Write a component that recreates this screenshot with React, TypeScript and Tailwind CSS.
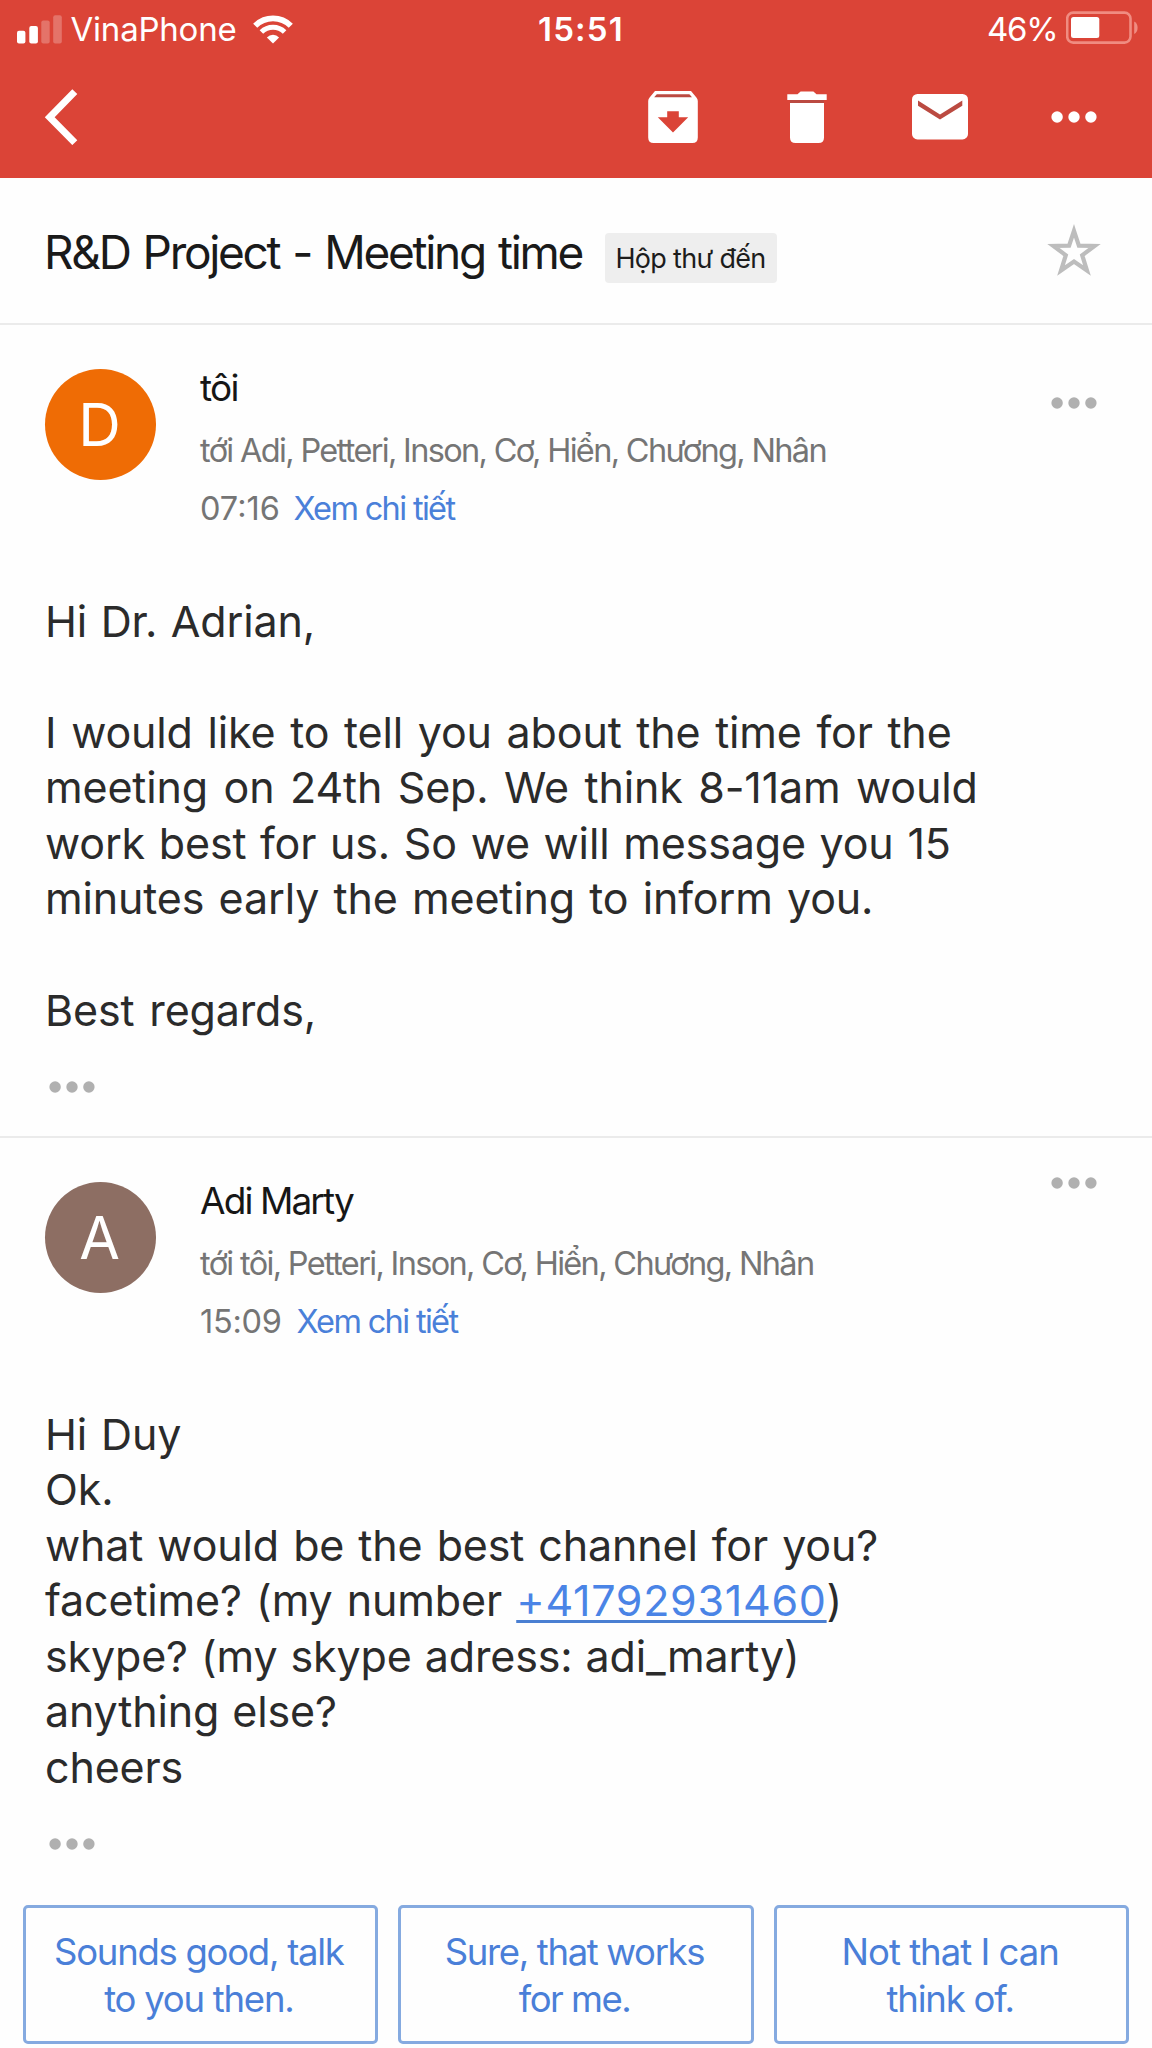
import type { ReactNode } from "react";

function Signal() {
  return (
    <svg className="h-[29px] w-[45px] shrink-0" viewBox="0 0 45 29" fill="#fff">
      <rect x="0" y="15.7" width="8.4" height="12.8" rx="2" />
      <rect x="12.3" y="11" width="8.6" height="17.5" rx="2" />
      <rect x="24.3" y="5.5" width="8.4" height="23" rx="2" opacity="0.25" />
      <rect x="36.2" y="0.2" width="8.6" height="28.3" rx="2" opacity="0.25" />
    </svg>
  );
}

function Wifi() {
  return (
    <svg className="h-[29px] w-[40px] shrink-0" viewBox="0 0 40 29" fill="none">
      <path d="M2.2 10.8A25.2 25.2 0 0 1 37.8 10.8" stroke="#fff" strokeWidth="5.8" />
      <path d="M8.4 17.1A16.4 16.4 0 0 1 31.6 17.1" stroke="#fff" strokeWidth="5" />
      <path d="M20 28.6L13.9 22.4A8.6 8.6 0 0 1 26.1 22.4Z" fill="#fff" />
    </svg>
  );
}

function Battery() {
  return (
    <svg className="h-[34px] w-[72px] shrink-0" viewBox="0 0 72 34">
      <rect x="1.2" y="1.6" width="63.3" height="30" rx="6" fill="none" stroke="#f08c81" strokeWidth="2.6" />
      <rect x="5" y="6" width="28.3" height="21" rx="2.5" fill="#fff" />
      <path d="M68.2 10.5Q71.6 12.4 71.6 16.8Q71.6 21.2 68.2 23Z" fill="#f08c81" />
    </svg>
  );
}

function Back() {
  return (
    <svg className="h-[56px] w-[34px] shrink-0" viewBox="0 0 34 56" fill="none">
      <path d="M30.8 2.6L5.7 28.2L30.8 53.6" stroke="#fff" strokeWidth="7" />
    </svg>
  );
}

function Archive() {
  return (
    <svg className="h-[52px] w-[50px] shrink-0" viewBox="0 0 50 52">
      <path d="M7 0H43L48.4 6.4Q49.8 8 49.8 10V46.5Q49.8 52 44.3 52H5.7Q0.2 52 0.2 46.5V10Q0.2 8 1.6 6.4Z" fill="#fff" />
      <path d="M8.8 3.2H41.4L44 6.3H6.2Z" fill="#bb4a41" />
      <path d="M19.2 20.2H30.8V26.2H40.2L25 41.5L9.8 26.2H19.2Z" fill="#db4437" />
    </svg>
  );
}

function Trash() {
  return (
    <svg className="h-[52px] w-[40px] shrink-0" viewBox="0 0 40 52">
      <path d="M0.3 3.2H10.5L13.6 0.6H26.4L29.5 3.2H39.7V9H0.3Z" fill="#fff" />
      <rect x="3" y="9" width="34" height="3" fill="#bb4a41" />
      <path d="M3 12H37V46.5Q37 52 31.5 52H8.5Q3 52 3 46.5Z" fill="#fff" />
    </svg>
  );
}

function Mail() {
  return (
    <svg className="h-[46px] w-[56px] shrink-0" viewBox="0 0 56 46">
      <rect width="56" height="45.4" rx="5.5" fill="#fff" />
      <path d="M6 6.5L28 20.4L50.3 6.5V11.8L28 25.6L6 11.8Z" fill="#bb4a41" />
    </svg>
  );
}

function Dots({ className }: { className: string }) {
  return (
    <svg className={"h-[12px] w-[46px] shrink-0 " + className} viewBox="0 0 46 12" fill="currentColor">
      <circle cx="6.1" cy="6" r="5.7" />
      <circle cx="23" cy="6" r="5.7" />
      <circle cx="39.9" cy="6" r="5.7" />
    </svg>
  );
}

function Star() {
  return (
    <svg className="h-[54px] w-[56px] shrink-0" viewBox="0 0 56 54" fill="none">
      <path
        d="M28 6.8L32.9 21.6L48.6 21.9L36.2 31.2L41 46.6L28 37.6L15 46.6L19.8 31.2L7.4 21.9L23.1 21.6Z"
        stroke="#bdbdbd"
        strokeWidth="4.2"
      />
    </svg>
  );
}

type MessageProps = {
  initial: string;
  avatar: string;
  name: ReactNode;
  to: ReactNode;
  time: ReactNode;
  menu: string;
  children: ReactNode;
};

function Message({ initial, avatar, name, to, time, menu, children }: MessageProps) {
  return (
    <>
      <div className="flex items-start pt-[44px] pr-[55px] pl-[45px]">
        <div className={"flex size-[111px] shrink-0 items-center justify-center rounded-full pr-[2px] text-[59px] leading-none text-white " + avatar}>
          {initial}
        </div>
        <div className="ml-[44px] flex-1 whitespace-nowrap">
          <div className="text-[37px] leading-[37px] text-[#161616]">{name}</div>
          <div className="mt-[15.5px] text-[32.5px] leading-[58px] tracking-[-1.67px] text-[#757575]">{to}</div>
          <div className="flex text-[32.5px] leading-[58px] text-[#757575]">
            {time}
            <a className="tracking-[-1.65px] text-[#4a80d9]">Xem chi tiết</a>
          </div>
        </div>
        <Dots className={"text-[#b0b0b0] " + menu} />
      </div>
      <div className="mt-[56px] pl-[45px] text-[43px] leading-[55.6px] tracking-[-0.15px] whitespace-nowrap text-[#2b2b2b]">
        {children}
      </div>
      <Dots className="mt-[42.7px] ml-[49px] text-[#b0b0b0]" />
    </>
  );
}

function Reply({ children }: { children: ReactNode }) {
  return (
    <button className="flex h-[139px] flex-col items-center justify-center rounded-[5px] border-3 border-[#85aae0] pt-[2px] pr-[3px] text-[36.5px] leading-[47px] text-[#4a7fd8]">
      {children}
    </button>
  );
}

export default function App() {
  return (
    <div className="h-[2048px] w-[1152px] overflow-hidden bg-[#fefefe] font-['Inter',sans-serif]">
      <header className="h-[178px] bg-[#db4437] text-white">
        <div className="flex h-[59px] items-center pr-[14px] pl-[16.5px] text-[33px]">
          <div className="flex w-[521.5px] items-center">
            <Signal />
            <span className="ml-[9px] tracking-[-0.21px]">VinaPhone</span>
            <span className="ml-[16px] flex">
              <Wifi />
            </span>
          </div>
          <span className="font-semibold tracking-[1.2px]">15:51</span>
          <span className="ml-auto tracking-[-1.2px]">46%</span>
          <span className="ml-[8.5px] -mt-[3px] flex">
            <Battery />
          </span>
        </div>
        <div className="flex h-[119px] items-center pr-[55px] pb-[3px] pl-[44px]">
          <Back />
          <div className="ml-auto flex items-center">
            <Archive />
            <span className="ml-[88.5px] flex">
              <Trash />
            </span>
            <span className="ml-[85.5px] flex">
              <Mail />
            </span>
            <Dots className="ml-[83px]" />
          </div>
        </div>
      </header>

      <div className="flex h-[147px] items-center border-b-2 border-[#ebebeb] pr-[50px] pl-[44px]">
        <h1 className="mt-[3px] w-[561px] text-[46px] leading-none tracking-[-2.3px] whitespace-nowrap text-[#1a1a1a] [word-spacing:2.4px]">
          R&amp;D Project - Meeting time
        </h1>
        <span className="mt-[14px] flex h-[50px] w-[171.5px] items-center rounded-[4px] bg-[#eeeeee] pt-[3px] pl-[10.5px] text-[27px] tracking-[-0.7px] whitespace-nowrap text-[#1c1c1c]">
          Hộp thư đến
        </span>
        <span className="ml-auto flex">
          <Star />
        </span>
      </div>

      <section className="h-[813px] border-b-2 border-[#ebebeb]">
        <Message
          initial="D"
          avatar="bg-[#ef6c05]"
          name={<span className="tracking-[-1.7px]">tôi</span>}
          to="tới Adi, Petteri, Inson, Cơ, Hiển, Chương, Nhân"
          time={<span className="w-[93.5px]">07:16</span>}
          menu="mt-[28px]"
        >
          <p className="[word-spacing:1.7px]">Hi Dr. Adrian,</p>
          <br />
          <p className="[word-spacing:2.8px]">I would like to tell you about the time for the</p>
          <p className="[word-spacing:3.6px]">meeting on 24th Sep. We think 8-11am would</p>
          <p className="[word-spacing:1.8px]">work best for us. So we will message you 15</p>
          <p className="[word-spacing:2.4px]">minutes early the meeting to inform you.</p>
          <br />
          <p className="[word-spacing:3px]">Best regards,</p>
        </Message>
      </section>

      <section>
        <Message
          initial="A"
          avatar="bg-[#8d6e63]"
          name={<span className="tracking-[-1.9px]">Adi Marty</span>}
          to="tới tôi, Petteri, Inson, Cơ, Hiển, Chương, Nhân"
          time={<span className="w-[96.5px] tracking-[-0.29px]">15:09</span>}
          menu="-mt-[5px]"
        >
          <p className="[word-spacing:2px]">Hi Duy</p>
          <p>Ok.</p>
          <p className="[word-spacing:2.2px]">what would be the best channel for you?</p>
          <p className="[word-spacing:2.3px]">
            facetime? (my number{" "}
            <a className="tracking-[0.7px] text-[#4a84e6] underline decoration-[#4a7fd2] decoration-[3px] underline-offset-[4px]">
              +41792931460
            </a>
            )
          </p>
          <p className="[word-spacing:1.15px]">skype? (my skype adress: adi_marty)</p>
          <p className="[word-spacing:1.2px]">anything else?</p>
          <p>cheers</p>
        </Message>
        <div className="mt-[55px] grid grid-cols-3 gap-[20px] px-[22.5px]">
          <Reply>
            <span className="tracking-[-1.27px]">Sounds good, talk</span>
            <span className="tracking-[-1.23px]">to you then.</span>
          </Reply>
          <Reply>
            <span className="tracking-[-1.36px]">Sure, that works</span>
            <span className="tracking-[-1.5px]">for me.</span>
          </Reply>
          <Reply>
            <span className="tracking-[-1px]">Not that I can</span>
            <span className="tracking-[-1.22px]">think of.</span>
          </Reply>
        </div>
      </section>
    </div>
  );
}
